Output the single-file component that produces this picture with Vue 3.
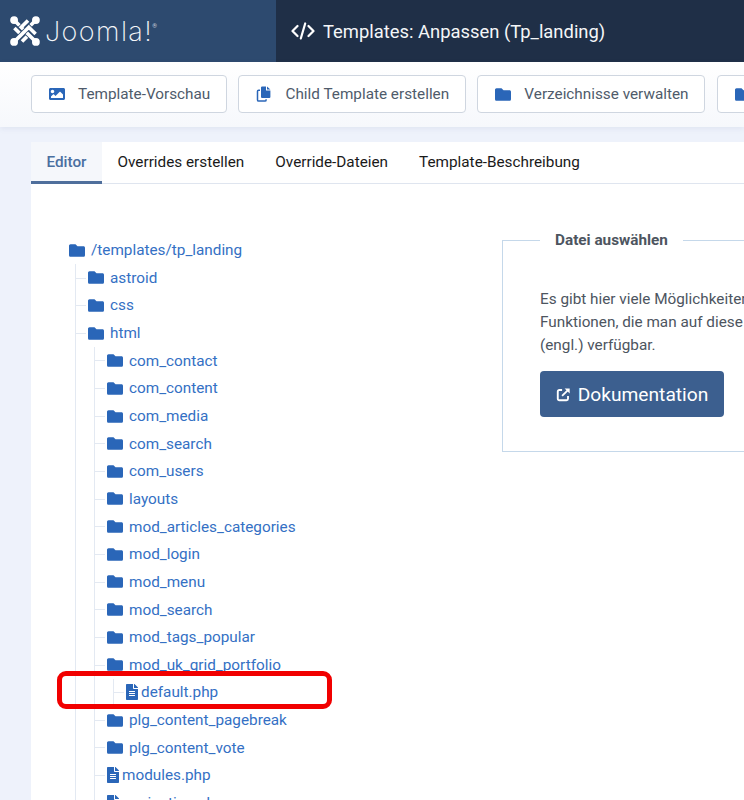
<script setup>
const tree = [
  { name: 'astroid' },
  { name: 'css' },
  {
    name: 'html',
    children: [
      { name: 'com_contact' }, { name: 'com_content' }, { name: 'com_media' },
      { name: 'com_search' }, { name: 'com_users' }, { name: 'layouts' },
      { name: 'mod_articles_categories' }, { name: 'mod_login' }, { name: 'mod_menu' },
      { name: 'mod_search' }, { name: 'mod_tags_popular' },
      { name: 'mod_uk_grid_portfolio', children: [{ name: 'default.php', file: true }] },
      { name: 'plg_content_pagebreak' }, { name: 'plg_content_vote' },
      { name: 'modules.php', file: true }, { name: 'pagination.php', file: true }
    ]
  }
]
const folder = 'M464 128H272l-64-64H48C21.49 64 0 85.49 0 112v288c0 26.51 21.49 48 48 48h416c26.51 0 48-21.49 48-48V176c0-26.51-21.49-48-48-48z'
const file = 'M224 136V0H24C10.7 0 0 10.7 0 24v464c0 13.3 10.7 24 24 24h336c13.3 0 24-10.7 24-24V160H248c-13.2 0-24-10.8-24-24zm64 236c0 6.6-5.4 12-12 12H108c-6.6 0-12-5.4-12-12v-8c0-6.6 5.4-12 12-12h168c6.6 0 12 5.4 12 12v8zm0-64c0 6.6-5.4 12-12 12H108c-6.6 0-12-5.4-12-12v-8c0-6.6 5.4-12 12-12h168c6.6 0 12 5.4 12 12v8zm0-72v8c0 6.6-5.4 12-12 12H108c-6.6 0-12-5.4-12-12v-8c0-6.6 5.4-12 12-12h168c6.6 0 12 5.4 12 12zm96-114.1v6.1H256V0h6.1c6.4 0 12.5 2.5 17 7l97.9 98c4.5 4.5 7 10.6 7 16.9z'
const tabs = ['Editor', 'Overrides erstellen', 'Override-Dateien', 'Template-Beschreibung']
const angles = [0, 90, 180, 270]
</script>

<template>
  <div class="page">
    <header class="topbar">
      <div class="brand">
        <svg class="logo" viewBox="-15 -15 30 30" width="30" height="30">
          <g v-for="a in angles" :key="a" :transform="`rotate(${a})`">
            <path d="M-10 -10 L3.8 3.8 L-2.6 10" fill="none" stroke="#2d4a6f" stroke-width="5.2" />
            <path d="M-10 -10 L3.8 3.8 L-3 10.6" fill="none" stroke="#fff" stroke-width="3.6" />
            <circle cx="-10.9" cy="-10.9" r="3.9" fill="#fff" />
          </g>
        </svg>
        <span class="wordmark">Joomla!</span><span class="reg">®</span>
      </div>
      <div class="title">
        <svg class="code" viewBox="0 0 24 18" width="24" height="18">
          <path d="M6.5 4 L1.5 9 L6.5 14 M17.5 4 L22.5 9 L17.5 14" fill="none" stroke="#fff" stroke-width="2.2" stroke-linecap="round" stroke-linejoin="round" />
          <path d="M14.2 1.5 L9.8 16.5" fill="none" stroke="#fff" stroke-width="2.2" stroke-linecap="round" />
        </svg>
        <h1>Templates: Anpassen (Tp_landing)</h1>
      </div>
    </header>

    <nav class="toolbar">
      <button class="tool" type="button">
        <svg class="ticon" viewBox="0 0 512 512"><path d="M464 448H48c-26.51 0-48-21.49-48-48V112c0-26.51 21.49-48 48-48h416c26.51 0 48 21.49 48 48v288c0 26.51-21.49 48-48 48zM112 120c-30.928 0-56 25.072-56 56s25.072 56 56 56 56-25.072 56-56-25.072-56-56-56zM64 384h384V272l-87.515-87.515c-4.686-4.686-12.284-4.686-16.971 0L208 320l-55.515-55.515c-4.686-4.686-12.284-4.686-16.971 0L64 336v48z" /></svg>
        Template-Vorschau
      </button>
      <button class="tool" type="button">
        <svg class="ticon" viewBox="0 0 16 16">
          <path d="M4 4.2 H2.6 A1.1 1.1 0 0 0 1.5 5.3 V14 A1.1 1.1 0 0 0 2.6 15.1 H9 A1.1 1.1 0 0 0 10.1 14 V13.2" fill="none" stroke="#2a66b8" stroke-width="1.5" />
          <path d="M5 1.6 A1.1 1.1 0 0 1 6.1 .5 H10 V4.6 H14.4 V11 A1.1 1.1 0 0 1 13.3 12.1 H6.1 A1.1 1.1 0 0 1 5 11 Z" />
          <path d="M11 .5 L14.4 3.6 H11 Z" />
        </svg>
        Child Template erstellen
      </button>
      <button class="tool" type="button">
        <svg class="ticon" viewBox="0 60 512 392" preserveAspectRatio="none"><path :d="folder" /></svg>
        Verzeichnisse verwalten
      </button>
      <button class="tool" type="button">
        <svg class="ticon" viewBox="0 60 512 392" preserveAspectRatio="none"><path :d="folder" /></svg>
        Dateien
      </button>
    </nav>

    <main class="main">
      <section class="card">
        <div class="tabs">
          <a v-for="(t, i) in tabs" :key="t" class="tab" :class="{ active: i === 0 }">{{ t }}</a>
        </div>
        <div class="body">
          <div class="treewrap">
            <div class="row root">
              <svg class="fi" viewBox="0 60 512 392" preserveAspectRatio="none"><path :d="folder" /></svg>
              <a>/templates/tp_landing</a>
            </div>
            <ul class="tree">
              <li v-for="a in tree" :key="a.name">
                <div class="row">
                  <svg class="fi" viewBox="0 60 512 392" preserveAspectRatio="none"><path :d="folder" /></svg>
                  <a>{{ a.name }}</a>
                </div>
                <ul v-if="a.children" class="tree">
                  <li v-for="b in a.children" :key="b.name">
                    <div class="row" :class="{ isfile: b.file }">
                      <svg v-if="b.file" class="fl" viewBox="0 0 384 512"><path :d="file" /></svg>
                      <svg v-else class="fi" viewBox="0 60 512 392" preserveAspectRatio="none"><path :d="folder" /></svg>
                      <a>{{ b.name }}</a>
                    </div>
                    <ul v-if="b.children" class="tree">
                      <li v-for="c in b.children" :key="c.name">
                        <div class="row isfile">
                          <svg class="fl" viewBox="0 0 384 512"><path :d="file" /></svg>
                          <a>{{ c.name }}</a>
                        </div>
                      </li>
                    </ul>
                  </li>
                </ul>
              </li>
            </ul>
            <div class="highlight"></div>
          </div>

          <fieldset class="box">
            <legend>Datei auswählen</legend>
            <p>Es gibt hier viele Möglichkeiten, um das Template anzupassen.<br />Funktionen, die man auf diese Weise nutzen kann, sind in der Dokumentation<br />(engl.) verfügbar.</p>
            <a class="doc">
              <svg viewBox="0 0 16 16" width="15" height="15">
                <path d="M6.5 3.2 H3.5 A1.6 1.6 0 0 0 1.9 4.8 V12.5 A1.6 1.6 0 0 0 3.5 14.1 H11.2 A1.6 1.6 0 0 0 12.8 12.5 V9.5" fill="none" stroke="#fff" stroke-width="2" />
                <path d="M6.5 9.5 L13 3" fill="none" stroke="#fff" stroke-width="2" />
                <path d="M9.2 1.6 H14.6 V7 Z" fill="#fff" />
              </svg>
              Dokumentation
            </a>
          </fieldset>
        </div>
      </section>
    </main>
  </div>
</template>

<style>
html, body { margin: 0; overflow: hidden; }
</style>

<style scoped>
.page {
  width: 744px;
  height: 800px;
  overflow: hidden;
  background: #eef2fb;
  font-family: Roboto, "Liberation Sans", sans-serif;
}
.topbar { display: flex; height: 62px; color: #fff; }
.brand {
  width: 276px;
  flex: none;
  box-sizing: border-box;
  padding-left: 10px;
  display: flex;
  align-items: center;
  background: #2d4a6f;
}
.logo { flex: none; margin-right: 5px; }
.wordmark {
  font-family: Inter, sans-serif;
  font-weight: 200;
  font-size: 27px;
  letter-spacing: 1.4px;
  color: #f4f6f9;
}
.reg { font-size: 6px; align-self: flex-start; margin-top: 22px; margin-left: -1px; color: #c8d0da; }
.title {
  flex: 1;
  display: flex;
  align-items: center;
  gap: 8px;
  padding-left: 15px;
  background: #1f2f47;
}
.title h1 { margin: 0; font-size: 18.4px; font-weight: 400; color: #f4f6f8; }

.toolbar {
  height: 65px;
  box-sizing: border-box;
  padding: 13px 0 0 31px;
  display: flex;
  gap: 11.8px;
  background: linear-gradient(#fff, #f6f8fc);
  box-shadow: 0 2px 5px rgba(120, 140, 180, 0.12);
  position: relative;
}
.tool {
  flex: none;
  height: 38px;
  box-sizing: border-box;
  padding: 0 15.4px 0 17px;
  display: flex;
  align-items: center;
  gap: 13px;
  background: #fff;
  border: 1px solid #cfd6e0;
  border-radius: 4px;
  font: 400 15.3px Roboto, sans-serif;
  color: #4f5b6b;
}
.ticon { width: 16px; height: 16px; fill: #2a66b8; flex: none; }
.ticon[preserveAspectRatio] { height: 13px; }

.main { padding: 15px 0 0 31px; }
.card { background: #fff; height: 680px; }
.tabs { display: flex; height: 42px; box-sizing: border-box; border-bottom: 1px solid #dfe5ef; }
.tab {
  padding: 0 15.5px;
  line-height: 41px;
  font-size: 15.3px;
  color: #1a1a1a;
}
.tab.active {
  padding: 0 15.5px;
  font-weight: 500;
  color: #4a6fa0;
  background: #f5f7fb;
  height: 42px;
  box-sizing: border-box;
  border-bottom: 3px solid #4f6f9c;
}
.body { display: flex; }
.treewrap {
  position: relative;
  width: 471px;
  flex: none;
  box-sizing: border-box;
  padding: 52.4px 0 0 38px;
  font-size: 15.3px;
  color: #3470c4;
}
.row {
  height: 27.65px;
  display: flex;
  align-items: center;
  gap: 6px;
  white-space: nowrap;
}
.row.isfile { gap: 3px; }
.fi { width: 16px; height: 13px; fill: #2a66b8; flex: none; }
.fl { width: 12px; height: 16px; fill: #2a66b8; flex: none; }
.tree {
  list-style: none;
  margin: 0 0 0 6px;
  padding: 0 0 0 12px;
  border-left: 1px solid #e3e9f2;
  box-sizing: border-box;
}
.tree li { position: relative; }
.tree li::before {
  content: "";
  position: absolute;
  left: -12px;
  top: 13.5px;
  width: 10px;
  border-top: 1px solid #e3e9f2;
}
.highlight {
  position: absolute;
  left: 26px;
  top: 487px;
  width: 275px;
  height: 38px;
  box-sizing: border-box;
  border: 5px solid #f10000;
  border-radius: 9px;
}
.box {
  flex: none;
  width: 400px;
  height: 221px;
  box-sizing: border-box;
  margin: 47px 0 0 0;
  padding: 0 0 0 37px;
  border: 1px solid #c5d8ea;
  min-width: 0;
}
.box legend {
  padding: 0 15px;
  font-size: 15.3px;
  font-weight: 700;
  color: #4d5560;
  line-height: 18px;
}
.box p {
  margin: 39px 0 0 0;
  font-size: 15.3px;
  line-height: 23px;
  color: #4d5560;
  white-space: nowrap;
}
.doc {
  margin-top: 14px;
  width: 184px;
  height: 46px;
  box-sizing: border-box;
  display: flex;
  align-items: center;
  justify-content: center;
  gap: 7px;
  background: #3c5f8f;
  border-radius: 4px;
  color: #fff;
  font-size: 19.2px;
}
</style>
